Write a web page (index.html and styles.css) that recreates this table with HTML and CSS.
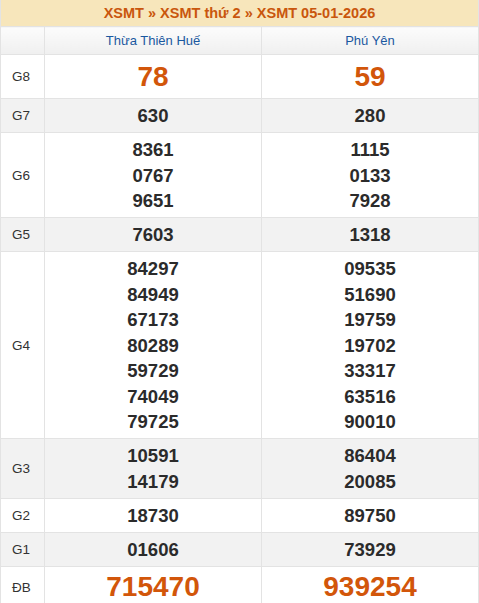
FILE: index.html
```html
<!DOCTYPE html>
<html lang="vi">
<head>
<meta charset="utf-8">
<link rel="stylesheet" href="styles.css">
</head>
<body>
<table class="kq">
  <colgroup><col class="c-lbl"><col class="c-prov"><col class="c-prov"></colgroup>
  <thead>
    <tr><th colspan="3" class="title"><a>XSMT</a> » <a>XSMT thứ 2</a> » <a>XSMT 05-01-2026</a></th></tr>
    <tr class="prov"><th class="lbl"></th><th>Thừa Thiên Huế</th><th>Phú Yên</th></tr>
  </thead>
  <tbody>
    <tr class="g8"><td class="lbl">G8</td><td class="big">78</td><td class="big">59</td></tr>
    <tr class="alt"><td class="lbl">G7</td><td class="num">630</td><td class="num">280</td></tr>
    <tr><td class="lbl">G6</td><td class="num">8361<br>0767<br>9651</td><td class="num">1115<br>0133<br>7928</td></tr>
    <tr class="alt"><td class="lbl">G5</td><td class="num">7603</td><td class="num">1318</td></tr>
    <tr><td class="lbl">G4</td><td class="num">84297<br>84949<br>67173<br>80289<br>59729<br>74049<br>79725</td><td class="num">09535<br>51690<br>19759<br>19702<br>33317<br>63516<br>90010</td></tr>
    <tr class="alt"><td class="lbl">G3</td><td class="num">10591<br>14179</td><td class="num">86404<br>20085</td></tr>
    <tr><td class="lbl">G2</td><td class="num">18730</td><td class="num">89750</td></tr>
    <tr class="alt"><td class="lbl">G1</td><td class="num">01606</td><td class="num">73929</td></tr>
    <tr class="db"><td class="lbl">ĐB</td><td class="big db-num">715470</td><td class="big db-num">939254</td></tr>
  </tbody>
</table>
</body>
</html>
```
FILE: styles.css
```css
html, body {
  margin: 0;
  padding: 0;
  background: #fff;
}
body {
  font-family: "Liberation Sans", Arial, sans-serif;
  color: #333;
}
.kq {
  width: 479px;
  border-collapse: collapse;
  table-layout: fixed;
}
.c-lbl {
  width: 44px;
}
.kq th, .kq td {
  border: 1px solid #e3e3e3;
  text-align: center;
  padding: 0;
}
.title {
  background: #f7e6bb;
  height: 26px;
  font-size: 14.5px;
  font-weight: bold;
  color: #c9560d;
  border-top: none !important;
}
.title a {
  color: #c9560d;
}
.prov th {
  height: 27px;
  background: linear-gradient(#fcfcfc, #efefef);
  font-size: 13px;
  font-weight: normal;
  color: #1a58a0;
}
.lbl {
  font-size: 13.5px;
  color: #333;
  text-align: left !important;
  padding-left: 11px !important;
}
.num {
  font-size: 18.5px;
  font-weight: bold;
  line-height: 25.5px;
  padding: 4px 0 3.5px !important;
  color: #2b2b2b;
}
.big {
  font-size: 28px;
  font-weight: bold;
  color: #d2560a;
  line-height: 35px;
  padding: 4px 0 !important;
}
.db-num {
  font-size: 28px;
  line-height: 34px;
  padding: 3px 0 5px !important;
}
.alt td {
  background: #f2f2f2;
}
```
